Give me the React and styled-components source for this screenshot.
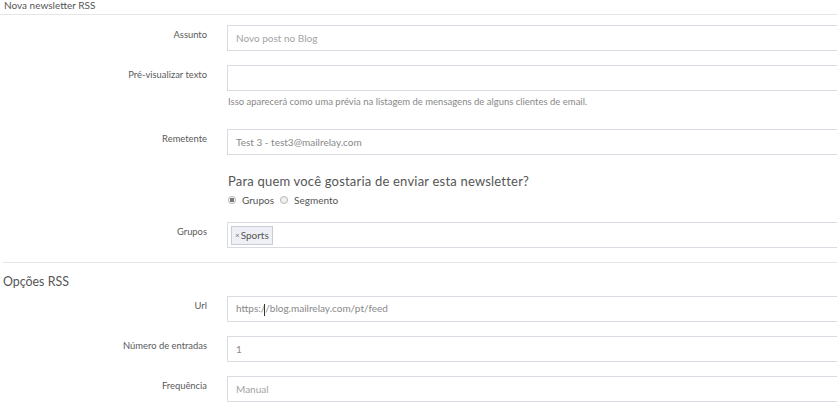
import React from 'react';
import styled, { createGlobalStyle } from 'styled-components';

const GlobalStyle = createGlobalStyle`
  html, body {
    margin: 0;
    padding: 0;
    background: #fff;
    overflow: hidden;
  }
  body {
    font-family: Lato, "Open Sans", Arial, sans-serif;
    color: #555;
  }
`;

const Page = styled.div`
  width: 837px;
  overflow: hidden;
`;

const Header = styled.div`
  height: 15px;
  padding: 0 4px;
  font-size: 10px;
  line-height: 10px;
  color: #555;
  border-bottom: 1px solid #e6e6e6;
  box-sizing: border-box;
`;

const Form = styled.div`
  padding-top: 10px;
`;

const Row = styled.div`
  display: grid;
  grid-template-columns: 207px 1fr;
  column-gap: 20px;
  margin-bottom: ${(p) => p.$mb ?? 14}px;
`;

const Label = styled.div`
  text-align: right;
  font-size: 9.4px;
  line-height: 14px;
  padding-top: 3px;
  color: #5a5a5a;
`;

const Field = styled.div`
  display: flex;
  flex-direction: column;
  margin-right: -6px;
`;

const Input = styled.div`
  height: 26px;
  box-sizing: border-box;
  border: 1px solid #d9dbe3;
  padding: 0 8px;
  display: flex;
  align-items: center;
  font-size: 10px;
  color: ${(p) => (p.$dim ? '#a3a3a3' : '#888')};
`;

const TagInput = styled(Input)`
  padding: 0 3px;
`;

const Tag = styled.span`
  display: inline-flex;
  align-items: center;
  height: 19px;
  padding: 0 3px;
  background: #eef0f5;
  border: 1px solid #c9ccd6;
  box-sizing: border-box;
  font-size: 10px;
  color: #555;
`;

const TagX = styled.span`
  font-size: 8px;
  color: #777;
  margin-right: 1px;
`;

const Caret = styled.span`
  display: inline-block;
  width: 1px;
  height: 12px;
  background: #333;
  margin-left: -1px;
  vertical-align: middle;
`;

const Help = styled.div`
  margin-top: 4px;
  font-size: 9.5px;
  line-height: 13px;
  color: #888;
  padding-left: 1px;
`;

const Question = styled.div`
  margin-left: 228px;
  margin-top: 17px;
  font-size: 13px;
  line-height: 19px;
  color: #555;
  letter-spacing: 0.2px;
`;

const Radios = styled.div`
  margin-left: 228px;
  height: 18px;
  display: flex;
  align-items: center;
  gap: 6px;
  font-size: 10px;
  color: #555;
  margin-bottom: 13px;
`;

const RadioItem = styled.label`
  display: inline-flex;
  align-items: center;
  gap: 6px;
`;

const RadioDot = styled.span`
  width: 8px;
  height: 8px;
  border-radius: 50%;
  box-sizing: border-box;
  border: 1px solid #b5b5b5;
  background: ${(p) => (p.$checked ? 'radial-gradient(circle, #777 0 2px, #f2f2f2 2.5px)' : '#f2f2f2')};
`;

const Divider = styled.hr`
  margin: 0 0 0 3px;
  border: none;
  border-top: 1px solid #e8e8e8;
  height: 0;
`;

const Section = styled.div`
  padding: 9px 3px 0;
  font-size: 12.4px;
  line-height: 20px;
  color: #555;
  margin-bottom: 4px;
`;

export default function App() {
  return (
    <Page>
      <GlobalStyle />
      <Header>Nova newsletter RSS</Header>
      <Form>
        <Row>
          <Label>Assunto</Label>
          <Field>
            <Input $dim>Novo post no Blog</Input>
          </Field>
        </Row>
        <Row $mb={21}>
          <Label>Pré-visualizar texto</Label>
          <Field>
            <Input />
            <Help>Isso aparecerá como uma prévia na listagem de mensagens de alguns clientes de email.</Help>
          </Field>
        </Row>
        <Row $mb={0}>
          <Label>Remetente</Label>
          <Field>
            <Input>Test 3 - test3@mailrelay.com</Input>
          </Field>
        </Row>
        <Question>Para quem você gostaria de enviar esta newsletter?</Question>
        <Radios>
          <RadioItem>
            <RadioDot $checked />
            Grupos
          </RadioItem>
          <RadioItem>
            <RadioDot />
            Segmento
          </RadioItem>
        </Radios>
        <Row>
          <Label>Grupos</Label>
          <Field>
            <TagInput>
              <Tag>
                <TagX>×</TagX>Sports
              </Tag>
            </TagInput>
          </Field>
        </Row>
        <Divider />
        <Section>Opções RSS</Section>
        <Row>
          <Label>Url</Label>
          <Field>
            <Input>
              <span>
                https:/<Caret />/blog.mailrelay.com/pt/feed
              </span>
            </Input>
          </Field>
        </Row>
        <Row>
          <Label>Número de entradas</Label>
          <Field>
            <Input>1</Input>
          </Field>
        </Row>
        <Row>
          <Label>Frequência</Label>
          <Field>
            <Input $dim>Manual</Input>
          </Field>
        </Row>
      </Form>
    </Page>
  );
}
